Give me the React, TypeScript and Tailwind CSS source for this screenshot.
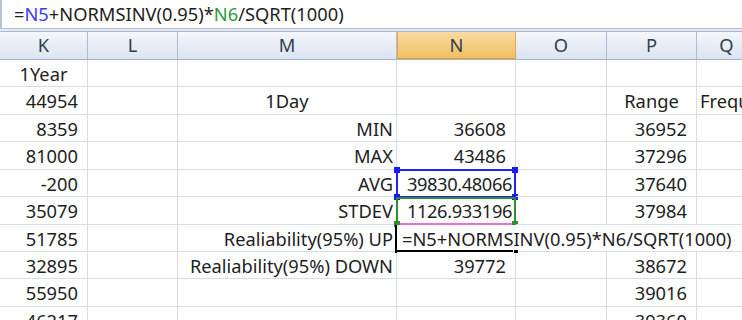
import React from "react";

type Cell = { v?: string; a?: "l" | "c" | "r" | "n" | "d" };

// column widths in px (K..Q), right gridline included
const widths = ["w-[88px]", "w-[90px]", "w-[219px]", "w-[119px]", "w-[91px]", "w-[90px]", "w-[60px]"];
const letters = ["K", "L", "M", "N", "O", "P", "Q"];
const heights = ["h-[27px]", "h-[28px]", "h-[27px]", "h-[28px]", "h-[27px]", "h-[28px]", "h-[27px]", "h-[27px]", "h-[28px]", "h-[27px]"];

const n = (v: string): Cell => ({ v, a: "n" });
const r = (v: string): Cell => ({ v, a: "r" });
const c = (v: string): Cell => ({ v, a: "c" });
const d = (v: string): Cell => ({ v, a: "d" });
const E: Cell = {};

const rows: Cell[][] = [
  [c("1Year"), E, E, E, E, E, E],
  [n("44954"), E, c("1Day"), E, E, c("Range"), { v: "Frequency", a: "l" }],
  [n("8359"), E, r("MIN"), n("36608"), E, n("36952"), E],
  [n("81000"), E, r("MAX"), n("43486"), E, n("37296"), E],
  [n("-200"), E, r("AVG"), d("39830.48066"), E, n("37640"), E],
  [n("35079"), E, r("STDEV"), d("1126.933196"), E, n("37984"), E],
  // P7 is hidden under the formula being typed in N7
  [n("51785"), E, r("Realiability(95%) UP"), E, E, E, E],
  [n("32895"), E, r("Realiability(95%) DOWN"), n("39772"), E, n("38672"), E],
  [n("55950"), E, E, E, E, n("39016"), E],
  [n("46217"), E, E, E, E, n("39360"), E],
];

const Formula = () => (
  <span>
    =<span className="text-[#3b3bff]">N5</span>+NORMSINV(0.95)*<span className="text-[#2f9a3c]">N6</span>/SQRT(1000)
  </span>
);

const Handle = ({ pos, color }: { pos: string; color: string }) => (
  <div className={`absolute w-[6px] h-[6px] ${pos} ${color}`} />
);

function Overlay({ row, col }: { row: number; col: number }) {
  if (col !== 3) return null;
  if (row === 4)
    return (
      <div className="absolute left-[-1px] top-[-1px] w-[120px] h-[29px] border-2 border-[#2222ee] pointer-events-none">
        <Handle pos="left-[-4px] top-[-4px]" color="bg-[#1a1aee]" />
        <Handle pos="right-[-4px] top-[-4px]" color="bg-[#1a1aee]" />
        <Handle pos="left-[-4px] bottom-[-4px]" color="bg-[#1a1aee]" />
        <Handle pos="right-[-4px] bottom-[-4px]" color="bg-[#1a1aee]" />
      </div>
    );
  if (row === 5)
    return (
      <div className="absolute left-[-1px] top-[0px] w-[120px] h-[28px] border-2 border-[#2f8f2f] border-b-[#ef6fd0] pointer-events-none">
        <Handle pos="left-[-4px] bottom-[-4px]" color="bg-[#2f8f2f]" />
        <Handle pos="right-[-4px] bottom-[-4px]" color="bg-[#2f8f2f]" />
      </div>
    );
  if (row === 6)
    return (
      <>
        <div className="absolute left-0 top-0 w-[346px] h-[26px] bg-white flex items-center pt-[2px] pl-[5px] z-10 whitespace-nowrap">
          <span>=N5+NORMSINV(0.95)*N6/SQRT(1000)</span>
        </div>
        <div className="absolute left-[-2px] top-0 w-[2px] h-[28px] bg-black z-20" />
        <div className="absolute left-[-2px] top-[25px] w-[121px] h-[2px] bg-black z-20" />
        <div className="absolute left-[116px] top-[24px] w-[6px] h-[5px] bg-black border border-white z-20" />
      </>
    );
  return null;
}

export default function App() {
  return (
    <div className="w-[742px] h-[320px] overflow-hidden bg-white text-[18.3px] text-[#1e1e1e] font-['Noto_Sans',sans-serif] leading-none">
      {/* formula bar */}
      <div className="h-[29px] border-l-2 border-b border-[#b7c3d3] bg-white flex items-center pl-[12px] whitespace-nowrap">
        <Formula />
      </div>
      <div className="h-[3px] bg-[#e3e9f1] border-b border-[#a7bad0]" />
      {/* column header */}
      <div className="flex h-[28px] border-b border-[#9eb6ce] whitespace-nowrap">
        {letters.map((l, i) => (
          <div
            key={l}
            className={`${widths[i]} shrink-0 flex items-center justify-center text-[#30404f] border-r ${
              l === "N"
                ? "bg-gradient-to-b from-[#f9dca2] to-[#f1c05e] border-[#f0a050] border-x border-b border-b-[#f29536]"
                : "bg-gradient-to-b from-[#f4f7fb] to-[#dbe4f1] border-[#a9bdd3]"
            }`}
          >
            {l}
          </div>
        ))}
      </div>
      {/* grid */}
      {rows.map((row, ri) => (
        <div key={ri} className={`flex ${heights[ri]} whitespace-nowrap`}>
          {row.map((cell, ci) => (
            <div
              key={ci}
              className={`${widths[ci]} shrink-0 relative flex items-center pt-[2px] border-r border-b border-[#d6dce8] ${
                cell.a === "n"
                  ? "justify-end pr-[9px]"
                  : cell.a === "d"
                  ? "justify-end pr-[3px] tracking-[-0.4px]"
                  : cell.a === "r"
                  ? "justify-end pr-[3px]"
                  : cell.a === "c"
                  ? "justify-center"
                  : "justify-start pl-[3px]"
              } ${ci === 6 ? "overflow-hidden" : ""}`}
            >
              {cell.v ? <span>{cell.v}</span> : null}
              <Overlay row={ri} col={ci} />
            </div>
          ))}
        </div>
      ))}
    </div>
  );
}
